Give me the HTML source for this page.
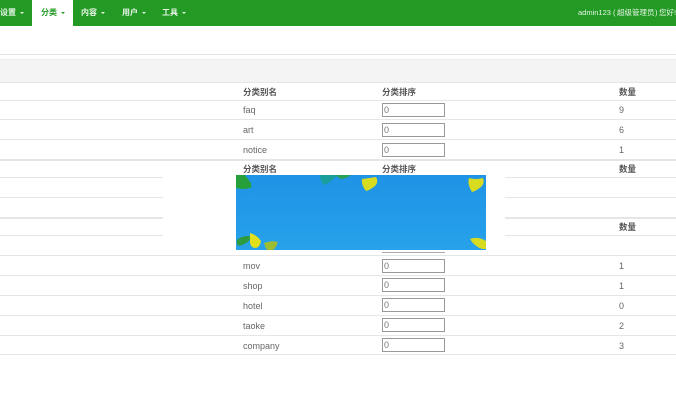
<!DOCTYPE html>
<html lang="zh">
<head>
<meta charset="utf-8">
<style>
html,body{margin:0;padding:0;background:#fff}
body{width:676px;height:418px;overflow:hidden;position:relative;font-family:"Liberation Sans","Noto Sans CJK SC",sans-serif;font-size:9px;color:#666}
#w{position:absolute;left:0;top:0;width:676px;height:418px;filter:blur(.35px)}
.a{position:absolute;white-space:nowrap;line-height:12px}
.l{position:absolute;left:0;width:676px;height:1px;background:#e6e6e6}
.nav{position:absolute;left:0;top:0;width:676px;height:25.5px;background:#229a24}
.n{position:absolute;top:7px;color:#e8f5e8;font-size:8px;font-weight:bold;line-height:12px;white-space:nowrap}
.c{display:inline-block;width:0;height:0;border-left:2px solid transparent;border-right:2px solid transparent;border-top:2px solid currentColor;margin-left:4px;vertical-align:middle}
.h{font-weight:bold;color:#555;font-size:8.5px}
.i{position:absolute;left:382px;width:60px;height:12px;border:1px solid #999;padding-left:1px;line-height:13px;font-size:9px;color:#777;background:#fff}
.s{font-weight:normal;font-size:7.5px}
</style>
</head>
<body>
<div id="w">
<div class="nav"></div>
<div class="a" style="left:32px;top:0;width:41px;height:26px;background:#fff"></div>
<div class="n" style="left:0">设置<span class="c"></span></div>
<div class="n" style="left:41px;color:#229a24">分类<span class="c"></span></div>
<div class="n" style="left:81px">内容<span class="c"></span></div>
<div class="n" style="left:122px">用户<span class="c"></span></div>
<div class="n" style="left:162px">工具<span class="c"></span></div>
<div class="n s" style="left:578px">admin123</div>
<div class="n s" style="left:613px">(</div>
<div class="n s" style="left:617px">超级管理员</div>
<div class="n s" style="left:655px">)</div>
<div class="n s" style="left:659px">您好</div>
<div class="n s" style="left:674px">!</div>

<div class="l" style="top:54px"></div>
<div class="a" style="left:0;top:59px;width:676px;height:23px;background:#f4f4f4;border-top:1px solid #ececec;box-sizing:border-box"></div>
<div class="l" style="top:82px"></div>
<div class="a h" style="left:243px;top:86px">分类别名</div>
<div class="a h" style="left:382px;top:86px">分类排序</div>
<div class="a h" style="left:619px;top:86px">数量</div>
<div class="l" style="top:100px"></div>
<div class="a" style="left:243px;top:104px">faq</div><div class="i" style="top:103px">0</div><div class="a" style="left:619px;top:104px">9</div>
<div class="l" style="top:119px"></div>
<div class="a" style="left:243px;top:124px">art</div><div class="i" style="top:123px">0</div><div class="a" style="left:619px;top:124px">6</div>
<div class="l" style="top:139px"></div>
<div class="a" style="left:243px;top:144px">notice</div><div class="i" style="top:143px">0</div><div class="a" style="left:619px;top:144px">1</div>
<div class="l" style="top:159px;height:2px"></div>
<div class="a h" style="left:243px;top:163px">分类别名</div>
<div class="a h" style="left:382px;top:163px">分类排序</div>
<div class="a h" style="left:619px;top:163px">数量</div>
<div class="l" style="top:177px"></div>
<div class="l" style="top:197px"></div>
<div class="l" style="top:217px;height:2px"></div>
<div class="a h" style="left:619px;top:221px">数量</div>
<div class="l" style="top:235px"></div>
<div class="l" style="top:255px"></div>

<div class="a" style="left:163px;top:175px;width:342px;height:76px;background:#fff"></div>
<svg class="a" style="left:236px;top:175px" width="250" height="75" viewBox="0 0 250 75">
<defs><linearGradient id="g" x1="0" y1="0" x2="0" y2="1"><stop offset="0" stop-color="#1f93e6"/><stop offset="1" stop-color="#27a2ea"/></linearGradient></defs>
<rect width="250" height="75" fill="url(#g)"/>
<path d="M0 0H9L15 8Q16 13 14 13Q6 15 0 13Z" fill="#27a03c"/>
<path d="M84 0H101Q97 6 88 10Q84 6 84 0Z" fill="#1a9e9c"/>
<path d="M100 0H115Q110 4 105 4Q102 3 100 0Z" fill="#2a9f55"/>
<path d="M126 4Q134 3 140 2Q143 7 139 11Q134 15 130 16Q125 10 126 4Z" fill="#d8dc20"/>
<path d="M233 3Q239 5 247 3Q249 8 245 12Q240 16 236 17Q231 9 233 3Z" fill="#d8dc20"/>
<path d="M1 65Q8 59 16 62Q12 68 6 70Q3 71 1 70Z" fill="#2d9b3e"/>
<path d="M14 58Q21 60 25 66Q24 72 20 73Q15 73 14 68Z" fill="#e0e01c"/>
<path d="M28 68Q36 65 42 67Q40 73 37 75H31Q29 72 28 68Z" fill="#9cbc34"/>
<path d="M234 64Q242 61 250 66V74H246Q238 71 234 64Z" fill="#d8dc20"/>
</svg>

<div class="a" style="left:382px;top:252px;width:63px;height:1px;background:#aaa"></div>

<div class="a" style="left:243px;top:260px">mov</div><div class="i" style="top:259px">0</div><div class="a" style="left:619px;top:260px">1</div>
<div class="l" style="top:275px"></div>
<div class="a" style="left:243px;top:280px">shop</div><div class="i" style="top:278px">0</div><div class="a" style="left:619px;top:280px">1</div>
<div class="l" style="top:295px"></div>
<div class="a" style="left:243px;top:300px">hotel</div><div class="i" style="top:298px">0</div><div class="a" style="left:619px;top:300px">0</div>
<div class="l" style="top:315px"></div>
<div class="a" style="left:243px;top:320px">taoke</div><div class="i" style="top:318px">0</div><div class="a" style="left:619px;top:320px">2</div>
<div class="l" style="top:335px"></div>
<div class="a" style="left:243px;top:340px">company</div><div class="i" style="top:338px">0</div><div class="a" style="left:619px;top:340px">3</div>
<div class="l" style="top:354px"></div>
</div>
</body>
</html>
